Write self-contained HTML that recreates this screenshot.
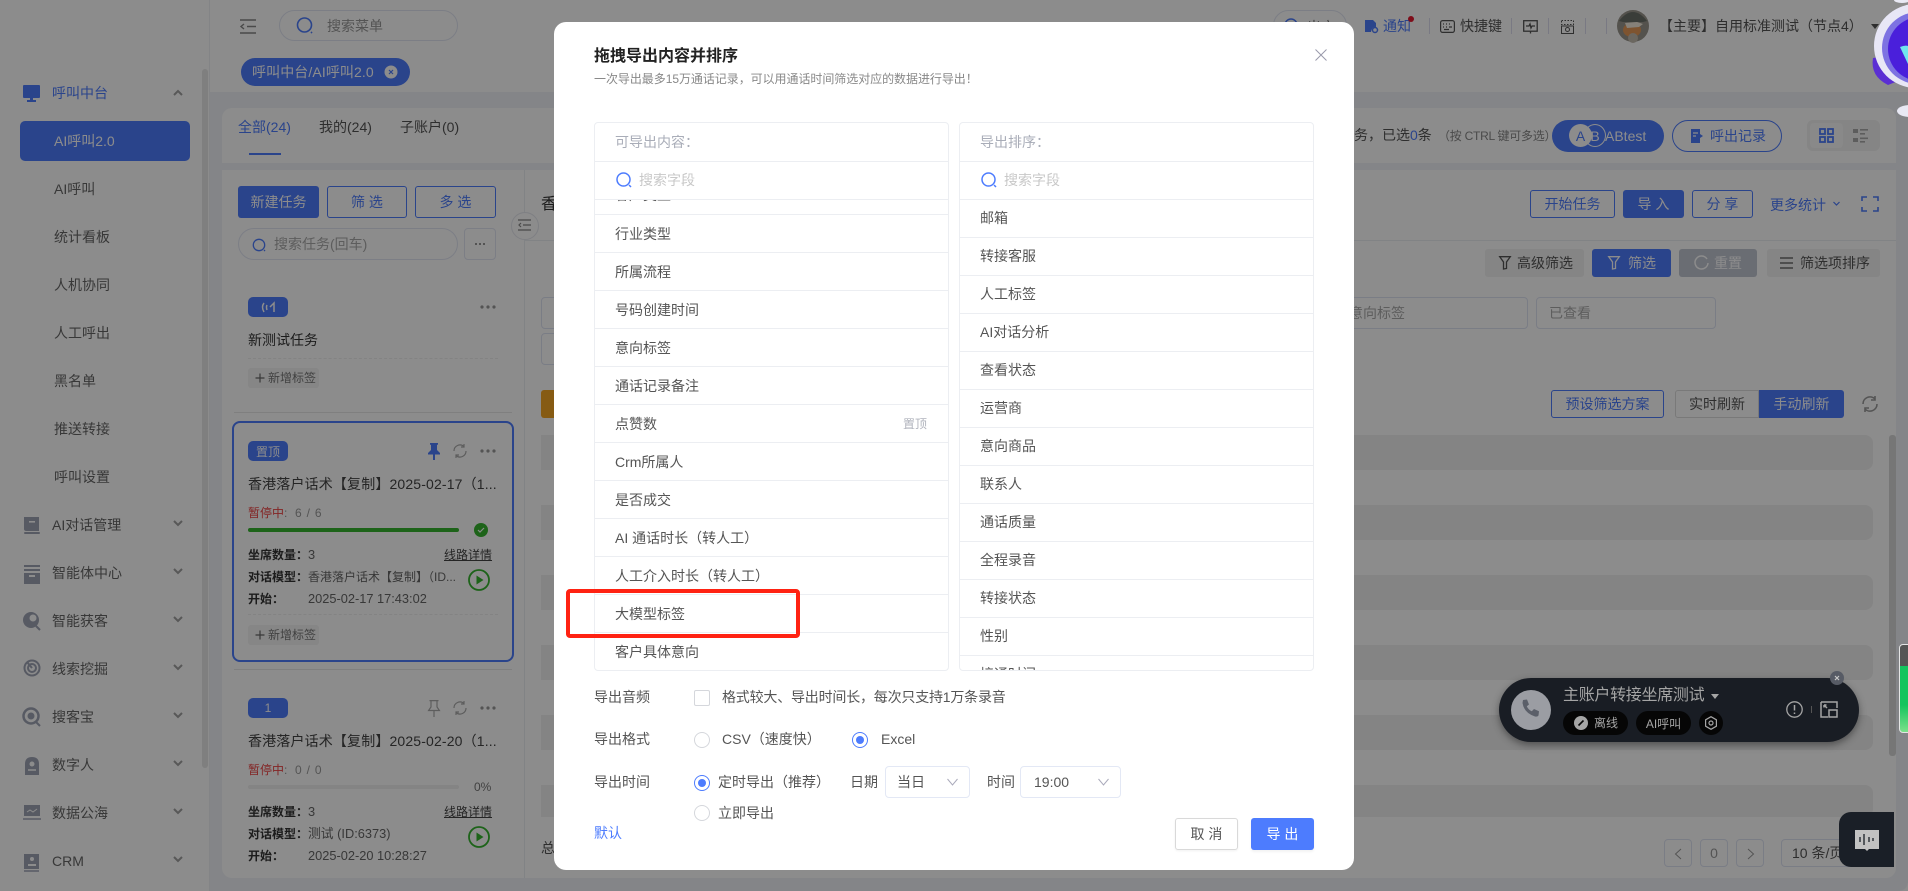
<!DOCTYPE html>
<html lang="zh"><head><meta charset="utf-8"><title>呼叫中台</title>
<style>
*{box-sizing:border-box;margin:0;padding:0}
html,body{width:1908px;height:891px;overflow:hidden;background:#fff}
body{position:relative;font-family:"Liberation Sans","Noto Sans CJK SC",sans-serif;font-size:14px;color:#555}
.t{position:absolute;white-space:nowrap;line-height:20px;height:20px}
.b{position:absolute}
.c{display:flex;align-items:center;justify-content:center;white-space:nowrap}
svg{position:absolute;overflow:visible}
.blue{color:#4d7cfe}
.pri{background:#4d7cfe;color:#fff;border-radius:3px}
.out{border:1px solid #4d7cfe;color:#4d7cfe;border-radius:3px;background:#fff}
.gbtn{background:#f2f2f2;color:#555;border-radius:3px}
.inp{border:1px solid #dfe3f3;border-radius:4px;background:#fff;color:#aaa}
.st{position:absolute;left:541px;width:1332px;background:#f0f0f0;border-radius:0 8px 8px 0}
.m{color:#666}
.lb{font-size:12px;font-weight:700;color:#333}
.v{font-size:12px;color:#666}
.d{font-size:12.8px}
.ov{position:absolute;inset:0;background:rgba(0,0,0,.45)}
.modal{position:absolute;left:554px;top:22px;width:800px;height:848px;background:#fff;border-radius:12px}
.p{position:absolute;border:1px solid #eceef2;border-radius:4px;background:#fff}
.ln{position:absolute;left:0;right:0;height:1px;background:#eceef2}
.r{position:absolute;color:#555;line-height:20px;white-space:nowrap;font-size:14px}
.rad{position:absolute;width:16px;height:16px;border:1px solid #d5d7dc;border-radius:50%;background:#fff}
.rad.on{border-color:#4d7cfe}
.rad.on:after{content:"";position:absolute;left:3px;top:3px;width:8px;height:8px;border-radius:50%;background:#4d7cfe}
.sel{position:absolute;border:1px solid #e3e8f5;border-radius:4px;height:32px;top:744px;line-height:30px;color:#555}
</style></head><body>

<!-- base page -->
<div class="b" style="left:0;top:0;width:1908px;height:891px;background:#f0f2f7"></div>
<div class="b" style="left:0;top:0;width:210px;height:891px;background:#fff;border-right:1px solid #eef0f4"></div>
<div class="b" style="left:202px;top:69px;width:6px;height:699px;background:#e7e7e7;border-radius:3px"></div>
<div class="b" style="left:210px;top:0;width:1698px;height:52px;background:#fff"></div>
<div class="b" style="left:210px;top:52px;width:1698px;height:40px;background:#fff"></div>

<!-- sidebar -->
<svg style="left:23px;top:85px" width="18" height="18" viewBox="0 0 18 18"><rect x="0" y="0" width="17" height="13" rx="1" fill="#4d7cfe"/><rect x="7" y="13" width="3" height="2" fill="#4d7cfe"/><rect x="4" y="15" width="9" height="2" fill="#4d7cfe"/></svg>
<span class="t blue" style="left:52px;top:83px">呼叫中台</span>
<svg style="left:173px;top:89px" width="10" height="8" viewBox="0 0 10 8"><path d="M1 6 5 2l4 4" fill="none" stroke="#a0a0a0" stroke-width="2"/></svg>
<div class="b pri c" style="left:20px;top:121px;width:170px;height:40px;border-radius:5px;justify-content:flex-start;padding-left:34px">AI呼叫2.0</div>
<span class="t m" style="left:54px;top:179px">AI呼叫</span>
<span class="t m" style="left:54px;top:227px">统计看板</span>
<span class="t m" style="left:54px;top:275px">人机协同</span>
<span class="t m" style="left:54px;top:323px">人工呼出</span>
<span class="t m" style="left:54px;top:371px">黑名单</span>
<span class="t m" style="left:54px;top:419px">推送转接</span>
<span class="t m" style="left:54px;top:467px">呼叫设置</span>
<span class="t m" style="left:52px;top:515px">AI对话管理</span>
<span class="t m" style="left:52px;top:563px">智能体中心</span>
<span class="t m" style="left:52px;top:611px">智能获客</span>
<span class="t m" style="left:52px;top:659px">线索挖掘</span>
<span class="t m" style="left:52px;top:707px">搜客宝</span>
<span class="t m" style="left:52px;top:755px">数字人</span>
<span class="t m" style="left:52px;top:803px">数据公海</span>
<span class="t m" style="left:52px;top:851px">CRM</span>
<svg style="left:173px;top:0" width="10" height="891" viewBox="0 0 10 891" fill="none" stroke="#a0a0a0" stroke-width="2"><path d="M1 521l4 4 4-4M1 569l4 4 4-4M1 617l4 4 4-4M1 665l4 4 4-4M1 713l4 4 4-4M1 761l4 4 4-4M1 809l4 4 4-4M1 857l4 4 4-4"/></svg>
<svg style="left:22px;top:510px" width="20" height="370" viewBox="0 0 20 370" fill="#9fa4b5">
<path d="M2 7h15v14H4.500q-2.500 0-2.500-2z"/><rect x="2" y="22" width="16" height="2" rx="1"/><rect x="7" y="11" width="6" height="1.600" fill="#fff"/>
<rect x="2" y="55" width="16" height="2"/><rect x="2" y="59" width="16" height="2"/><path d="M2 63h16v11H2z"/><rect x="7" y="65" width="6" height="2" fill="#fff"/>
<circle cx="9" cy="110" r="8"/><circle cx="11" cy="108" r="3.500" fill="#fff"/><path d="M14 116l4 4" stroke="#9fa4b5" stroke-width="2"/>
<circle cx="10" cy="158" r="7.500" fill="none" stroke="#9fa4b5" stroke-width="2"/><circle cx="10" cy="158" r="4" fill="none" stroke="#9fa4b5" stroke-width="2"/><path d="M5 152l5 6" stroke="#9fa4b5" stroke-width="2"/>
<circle cx="9" cy="206" r="7.500" fill="none" stroke="#9fa4b5" stroke-width="2.500"/><circle cx="9" cy="206" r="3.500" fill="#9fa4b5"/><path d="M14 212l4 4" stroke="#9fa4b5" stroke-width="2"/>
<path d="M3 254q0-7 7-7t7 7v11h-14z"/><circle cx="10" cy="254" r="2.500" fill="#fff"/><path d="M6 260h8" stroke="#fff" stroke-width="1.500"/>
<path d="M2 295h16v11H2z"/><path d="M1 309h18" stroke="#9fa4b5" stroke-width="1.500"/><path d="M5 302l3-2 3 2 4-3" stroke="#fff" fill="none"/>
<rect x="2" y="344" width="15" height="15"/><circle cx="10" cy="349" r="2" fill="#fff"/><path d="M6 355h8" stroke="#fff" stroke-width="2"/><path d="M2 361h15" stroke="#9fa4b5" stroke-width="1.500"/>
</svg>

<!-- header -->
<svg style="left:240px;top:19px" width="16" height="15" viewBox="0 0 16 15" fill="none" stroke="#888" stroke-width="1.400"><path d="M0 1h16M7 7.500h9M0 14h16"/><path d="M4 5 1 7.500 4 10"/></svg>
<div class="b" style="left:279px;top:10px;width:179px;height:31px;border:1px solid #e2e6f3;border-radius:16px"></div>
<svg style="left:296px;top:17px" width="18" height="18" viewBox="0 0 18 18" fill="none" stroke="#4d7cfe" stroke-width="1.600"><circle cx="8.500" cy="8" r="7"/><path d="M15 15l1 1"/></svg>
<span class="t" style="left:327px;top:16px;color:#999">搜索菜单</span>
<div class="b" style="left:1273px;top:10px;width:74px;height:31px;border:1px solid #e2e6f3;border-radius:16px"></div>
<span class="t" style="left:1307px;top:17px;color:#777;font-size:14px">出方</span>
<svg style="left:1283px;top:18px" width="16" height="16" viewBox="0 0 16 16" fill="none" stroke="#4d7cfe" stroke-width="1.500"><circle cx="8" cy="7" r="6"/></svg>

<svg style="left:1365px;top:20px" width="14" height="13" viewBox="0 0 14 13"><path d="M0 0h8l3 3v4q-4-1-5 5H0z" fill="#4d7cfe"/><circle cx="10" cy="10" r="2.500" fill="none" stroke="#4d7cfe" stroke-width="1.500"/></svg>
<span class="t blue" style="left:1383px;top:16px">通知</span>
<div class="b" style="left:1408px;top:16px;width:6px;height:6px;border-radius:50%;background:#e5182f"></div>
<div class="b" style="left:1429px;top:18px;width:1px;height:16px;background:#dde"></div>
<svg style="left:1440px;top:20px" width="15" height="13" viewBox="0 0 15 13" fill="none" stroke="#555" stroke-width="1.200"><rect x=".6" y=".6" width="13.800" height="11.800" rx="2"/><path d="M3 4h1M6 4h1M9 4h1M12 4h0M3 7h1M6 7h1M9 7h3M4 9.500h5" /></svg>
<span class="t" style="left:1460px;top:16px">快捷键</span>
<div class="b" style="left:1511px;top:18px;width:1px;height:16px;background:#dde"></div>
<svg style="left:1523px;top:20px" width="15" height="14" viewBox="0 0 15 14" fill="none" stroke="#555" stroke-width="1.300"><rect x=".7" y=".7" width="13.500" height="10.500"/><path d="M3 6h3l1-2 1 4 1-2h3M7.500 11.500v2"/></svg>
<div class="b" style="left:1548px;top:18px;width:1px;height:16px;background:#dde"></div>
<svg style="left:1561px;top:20px" width="13" height="14" viewBox="0 0 13 14" fill="none" stroke="#555"><rect x=".5" y=".5" width="12" height="4" stroke-dasharray="1.500 1.500"/><rect x=".5" y="6" width="12" height="7.500"/><circle cx="6.500" cy="9.500" r="2"/></svg>
<div class="b" style="left:1585px;top:18px;width:1px;height:16px;background:#dde"></div>
<div class="b" style="left:1606px;top:18px;width:1px;height:16px;background:#dde"></div>
<svg style="left:1617px;top:10px" width="32" height="32" viewBox="0 0 32 32"><circle cx="16" cy="16" r="16" fill="#9a968c"/><path d="M2 11Q16-7 30 11L26 12H6z" fill="#6b6f68"/><ellipse cx="15" cy="20" rx="9" ry="7" fill="#e59a58"/><path d="M8 13l12-1 6 2-4 3-12 1z" fill="#f5ecdc"/><circle cx="16" cy="28" r="5" fill="#c4bcb0"/></svg>
<span class="t" style="left:1659px;top:16px">【主要】自用标准测试（节点4）</span>
<svg style="left:1871px;top:24px" width="8" height="5" viewBox="0 0 8 5"><path d="M0 0h8L4 5z" fill="#555"/></svg>

<!-- tags -->
<div class="b pri" style="left:241px;top:58px;width:169px;height:28px;border-radius:14px"></div>
<span class="t" style="left:252px;top:62px;color:#fff;letter-spacing:.1px">呼叫中台/AI呼叫2.0</span>
<svg style="left:384px;top:65px" width="14" height="14" viewBox="0 0 14 14"><circle cx="7" cy="7" r="6.500" fill="#fff"/><path d="M5 5l4 4M9 5l-4 4" stroke="#4d7cfe" stroke-width="1.200"/></svg>

<!-- tabs card -->
<div class="b" style="left:222px;top:108px;width:1674px;height:55px;background:#fff;border-radius:10px 10px 0 0"></div>
<span class="t blue" style="left:238px;top:117px">全部(24)</span>
<span class="t" style="left:319px;top:117px">我的(24)</span>
<span class="t" style="left:400px;top:117px">子账户(0)</span>
<div class="b" style="left:249px;top:153px;width:32px;height:2px;background:#4d7cfe"></div>
<span class="t" style="left:1354px;top:125px">务，已选<span class="blue">0</span>条</span>
<span class="t" style="left:1438px;top:126px;font-size:12px;color:#888;letter-spacing:-.25px">（按 CTRL 键可多选）</span>
<div class="b pri" style="left:1552px;top:120px;width:112px;height:32px;border-radius:16px"></div>
<div class="b c" style="left:1569px;top:124px;width:23px;height:23px;border-radius:50%;background:#fff;color:#4d7cfe">A</div>
<div class="b c" style="left:1584px;top:124px;width:22px;height:23px;border-radius:50%;border:1px solid #fff;color:#fff">B</div>
<span class="t" style="left:1605px;top:126px;color:#fff">ABtest</span>
<div class="b out" style="left:1672px;top:120px;width:110px;height:32px;border-radius:16px"></div>
<svg style="left:1690px;top:128px" width="14" height="16" viewBox="0 0 14 16"><path d="M1 1h9v5l3 2-3 2v5H1z" fill="#4d7cfe"/><path d="M3 5h5M3 8h3" stroke="#fff" stroke-width="1.200"/></svg>
<span class="t blue" style="left:1710px;top:126px">呼出记录</span>
<div class="b" style="left:1807px;top:120px;width:73px;height:31px;background:#f2f2f2;border-radius:6px"></div>
<div class="b" style="left:1810px;top:123px;width:33px;height:25px;background:#f9f9f9;border-radius:4px"></div>
<svg style="left:1819px;top:128px" width="15" height="15" viewBox="0 0 15 15" fill="none" stroke="#4d7cfe" stroke-width="1.800"><rect x="1" y="1" width="5" height="5"/><rect x="9" y="1" width="5" height="5"/><rect x="1" y="9" width="5" height="5"/><rect x="9" y="9" width="5" height="5"/></svg>
<svg style="left:1853px;top:129px" width="15" height="14" viewBox="0 0 15 14" fill="#aaa"><rect x="0" y="0" width="5" height="4"/><rect x="0" y="9" width="5" height="4"/><rect x="7" y="0" width="8" height="1.600"/><rect x="7" y="4" width="5" height="1.600"/><rect x="7" y="8.500" width="8" height="1.600"/><rect x="7" y="12" width="5" height="1.600"/></svg>

<!-- main card -->
<div class="b" style="left:222px;top:170px;width:1674px;height:708px;background:#fff;border-radius:0 0 10px 10px"></div>
<div class="b" style="left:524px;top:170px;width:1px;height:708px;background:#eceef2"></div>

<!-- task column -->
<div class="b pri c" style="left:238px;top:186px;width:81px;height:32px">新建任务</div>
<div class="b out c" style="left:327px;top:186px;width:80px;height:32px">筛 选</div>
<div class="b out c" style="left:415px;top:186px;width:81px;height:32px">多 选</div>
<div class="b" style="left:238px;top:228px;width:220px;height:32px;border:1px solid #e2e6f3;border-radius:16px"></div>
<svg style="left:252px;top:238px" width="14" height="14" viewBox="0 0 14 14" fill="none" stroke="#4d7cfe" stroke-width="1.300"><circle cx="7" cy="7" r="5.700"/><path d="M12 12l1 1"/></svg>
<span class="t" style="left:274px;top:234px;color:#aaa">搜索任务(回车)</span>
<div class="b" style="left:464px;top:228px;width:32px;height:32px;border:1px solid #e2e6f3;border-radius:4px"></div>
<svg style="left:475px;top:243px" width="10" height="2" viewBox="0 0 10 2" fill="#777"><circle cx="1" cy="1" r="1"/><circle cx="5" cy="1" r="1"/><circle cx="9" cy="1" r="1"/></svg>

<!-- dots for the three task cards -->
<svg style="left:480px;top:0" width="16" height="891" viewBox="0 0 16 891" fill="#999"><circle cx="2" cy="307" r="1.600"/><circle cx="8" cy="307" r="1.600"/><circle cx="14" cy="307" r="1.600"/><circle cx="2" cy="451" r="1.600"/><circle cx="8" cy="451" r="1.600"/><circle cx="14" cy="451" r="1.600"/><circle cx="2" cy="708" r="1.600"/><circle cx="8" cy="708" r="1.600"/><circle cx="14" cy="708" r="1.600"/></svg>

<!-- card 1 -->
<div class="b pri c" style="left:248px;top:297px;width:40px;height:20px;border-radius:5px"></div>
<svg style="left:261px;top:302px" width="14" height="11" viewBox="0 0 14 11" fill="none" stroke="#fff" stroke-width="1.500"><path d="M3 1q-3 4 0 9M6 3q-1 2 0 5M9 5l4-4v9"/></svg>
<span class="t" style="left:248px;top:330px;color:#333">新测试任务</span>
<div class="b" style="left:248px;top:358px;width:250px;border-top:1px dashed #eee"></div>
<div class="b" style="left:248px;top:368px;width:71px;height:20px;background:#f4f4f4;border-radius:3px"></div>
<svg style="left:255px;top:373px" width="10" height="10" viewBox="0 0 10 10"><path d="M5 .5v9M.5 5h9" stroke="#666" stroke-width="1.200"/></svg>
<span class="t" style="left:268px;top:368px;font-size:12px;color:#777">新增标签</span>
<div class="b" style="left:234px;top:412px;width:278px;height:1px;background:#e8e8e8"></div>

<!-- card 2 -->
<div class="b" style="left:232px;top:421px;width:282px;height:241px;border:2px solid #4d7cfe;border-radius:8px"></div>
<div class="b pri c" style="left:248px;top:441px;width:40px;height:20px;border-radius:5px;font-size:12px">置顶</div>
<svg style="left:428px;top:443px" width="12" height="17" viewBox="0 0 12 17"><path d="M2 0h8v1.500L9 2v5l3 3v1.500H7V17H5v-5.500H0V10l3-3V2l-1-.5z" fill="#4d7cfe"/></svg>
<svg style="left:452px;top:443px" width="16" height="16" viewBox="0 0 16 16" fill="none" stroke="#aaa" stroke-width="1.200"><path d="M2 8a6 6 0 0 1 10-4.500M14 8a6 6 0 0 1-10 4.500"/><path d="M12 1v3H9M4 15v-3h3"/></svg>
<span class="t" style="left:248px;top:474px;color:#444;letter-spacing:.15px">香港落户话术【复制】2025-02-17（1...</span>
<span class="t" style="left:248px;top:503px;font-size:12px;color:#ee4444">暂停中<span style="color:#999">:</span></span>
<span class="t" style="left:295px;top:503px;font-size:12px;color:#999;letter-spacing:.8px">6 / 6</span>
<div class="b" style="left:248px;top:528px;width:211px;height:4px;background:#36b52f;border-radius:2px"></div>
<svg style="left:474px;top:523px" width="14" height="14" viewBox="0 0 14 14"><circle cx="7" cy="7" r="7" fill="#36b52f"/><path d="M4 7l2 2 4-4" fill="none" stroke="#fff" stroke-width="1.200"/></svg>
<span class="t lb" style="left:248px;top:545px">坐席数量：</span><span class="t v d" style="left:308px;top:545px">3</span>
<span class="t v" style="left:444px;top:545px;text-decoration:underline;color:#444">线路详情</span>
<span class="t lb" style="left:248px;top:567px">对话模型：</span><span class="t v" style="left:308px;top:567px">香港落户话术【复制】（ID...</span>
<span class="t lb" style="left:248px;top:589px">开始：</span><span class="t v d" style="left:308px;top:589px">2025-02-17 17:43:02</span>
<svg style="left:468px;top:569px" width="22" height="22" viewBox="0 0 22 22"><circle cx="11" cy="11" r="10" fill="none" stroke="#36b52f" stroke-width="1.800"/><path d="M8.500 6.500v9l7-4.500z" fill="#36b52f"/></svg>
<div class="b" style="left:248px;top:614px;width:250px;border-top:1px dashed #eee"></div>
<div class="b" style="left:248px;top:625px;width:71px;height:20px;background:#f4f4f4;border-radius:3px"></div>
<svg style="left:255px;top:630px" width="10" height="10" viewBox="0 0 10 10"><path d="M5 .5v9M.5 5h9" stroke="#666" stroke-width="1.200"/></svg>
<span class="t" style="left:268px;top:625px;font-size:12px;color:#777">新增标签</span>
<div class="b" style="left:234px;top:669px;width:278px;height:1px;background:#e8e8e8"></div>

<!-- card 3 -->
<div class="b pri c" style="left:248px;top:698px;width:40px;height:20px;border-radius:5px;font-size:12px">1</div>
<svg style="left:428px;top:700px" width="12" height="17" viewBox="0 0 12 17" fill="none" stroke="#aaa" stroke-width="1.200"><path d="M1.500.6h9M3 .6V7L.6 10.500h10.800L9 7V.6M6 11v6"/></svg>
<svg style="left:452px;top:700px" width="16" height="16" viewBox="0 0 16 16" fill="none" stroke="#aaa" stroke-width="1.200"><path d="M2 8a6 6 0 0 1 10-4.500M14 8a6 6 0 0 1-10 4.500"/><path d="M12 1v3H9M4 15v-3h3"/></svg>
<span class="t" style="left:248px;top:731px;color:#444;letter-spacing:.15px">香港落户话术【复制】2025-02-20（1...</span>
<span class="t" style="left:248px;top:760px;font-size:12px;color:#ee4444">暂停中<span style="color:#999">:</span></span>
<span class="t" style="left:295px;top:760px;font-size:12px;color:#999;letter-spacing:.8px">0 / 0</span>
<div class="b" style="left:248px;top:785px;width:211px;height:4px;background:#f1f1f1;border-radius:2px"></div>
<span class="t" style="left:474px;top:777px;font-size:12px;color:#777">0%</span>
<span class="t lb" style="left:248px;top:802px">坐席数量：</span><span class="t v d" style="left:308px;top:802px">3</span>
<span class="t v" style="left:444px;top:802px;text-decoration:underline;color:#444">线路详情</span>
<span class="t lb" style="left:248px;top:824px">对话模型：</span><span class="t v d" style="left:308px;top:824px">测试 (ID:6373)</span>
<span class="t lb" style="left:248px;top:846px">开始：</span><span class="t v d" style="left:308px;top:846px">2025-02-20 10:28:27</span>
<svg style="left:468px;top:826px" width="22" height="22" viewBox="0 0 22 22"><circle cx="11" cy="11" r="10" fill="none" stroke="#36b52f" stroke-width="1.800"/><path d="M8.500 6.500v9l7-4.500z" fill="#36b52f"/></svg>

<!-- right side -->
<div class="b" style="left:525px;top:240px;width:1371px;height:1px;background:#eceef2"></div>
<div class="b" style="left:511px;top:212px;width:28px;height:28px;border-radius:50%;background:#fff;border:1px solid #e6e8ee"></div>
<svg style="left:518px;top:219px" width="13" height="12" viewBox="0 0 13 12" fill="none" stroke="#888" stroke-width="1.200"><path d="M0 1h13M5 6h8M0 11h13M3 4 1 6l2 2"/></svg>
<span class="t" style="left:541px;top:195px;color:#333;font-size:16px">香</span>
<div class="b out c" style="left:1530px;top:190px;width:85px;height:28px">开始任务</div>
<div class="b pri c" style="left:1623px;top:190px;width:61px;height:28px">导 入</div>
<div class="b out c" style="left:1692px;top:190px;width:61px;height:28px">分 享</div>
<span class="t blue" style="left:1770px;top:195px">更多统计</span>
<svg style="left:1833px;top:201px" width="7" height="5" viewBox="0 0 7 5"><path d="M.5 1l3 3 3-3" fill="none" stroke="#4d7cfe" stroke-width="1.200"/></svg>
<svg style="left:1861px;top:196px" width="18" height="16" viewBox="0 0 18 16" fill="none" stroke="#4d7cfe" stroke-width="1.600"><path d="M1 5V1h5M12 1h5v4M17 11v4h-5M6 15H1v-4"/></svg>

<div class="b gbtn" style="left:1485px;top:249px;width:99px;height:28px"></div>
<svg style="left:1499px;top:256px" width="12" height="14" viewBox="0 0 12 14" fill="none" stroke="#555" stroke-width="1.300"><path d="M.7.7h10.600L7.500 6v6.500L4.500 13V6z"/></svg>
<span class="t" style="left:1517px;top:253px">高级筛选</span>
<div class="b pri" style="left:1592px;top:249px;width:79px;height:28px"></div>
<svg style="left:1608px;top:256px" width="12" height="14" viewBox="0 0 12 14" fill="none" stroke="#fff" stroke-width="1.300"><path d="M.7.7h10.600L7.500 6v6.500L4.500 13V6z"/></svg>
<span class="t" style="left:1628px;top:253px;color:#fff">筛选</span>
<div class="b" style="left:1679px;top:249px;width:78px;height:28px;background:#c2c6d2;border-radius:3px"></div>
<svg style="left:1694px;top:255px" width="15" height="15" viewBox="0 0 15 15" fill="none" stroke="#fff" stroke-width="1.500"><path d="M13 4a6.500 6.500 0 1 0 1 4"/></svg>
<span class="t" style="left:1714px;top:253px;color:#fff">重置</span>
<div class="b gbtn" style="left:1767px;top:249px;width:113px;height:28px"></div>
<svg style="left:1780px;top:257px" width="13" height="12" viewBox="0 0 13 12" fill="none" stroke="#555" stroke-width="1.300"><path d="M0 1h13M0 6h13M0 11h13"/></svg>
<span class="t" style="left:1800px;top:253px">筛选项排序</span>

<div class="b inp" style="left:1300px;top:297px;width:228px;height:32px"></div>
<span class="t" style="left:1349px;top:303px;color:#aaa">意向标签</span>
<div class="b inp" style="left:1536px;top:297px;width:180px;height:32px"></div>
<span class="t" style="left:1549px;top:303px;color:#aaa">已查看</span>
<div class="b inp" style="left:541px;top:297px;width:100px;height:32px"></div>
<div class="b inp" style="left:541px;top:333px;width:100px;height:32px"></div>
<div class="b" style="left:541px;top:390px;width:60px;height:28px;background:#f5a623;border-radius:3px 0 0 3px"></div>

<div class="b out c" style="left:1551px;top:390px;width:113px;height:28px">预设筛选方案</div>
<div class="b c" style="left:1675px;top:390px;width:84px;height:28px;border:1px solid #ddd;border-radius:3px 0 0 3px;background:#fff">实时刷新</div>
<div class="b pri c" style="left:1759px;top:390px;width:85px;height:28px;border-radius:0 3px 3px 0">手动刷新</div>
<svg style="left:1861px;top:395px" width="18" height="18" viewBox="0 0 18 18" fill="none" stroke="#999" stroke-width="1.600"><path d="M2 9a7 7 0 0 1 12-5M16 9a7 7 0 0 1-12 5"/><path d="M14 1v4h-4M4 17v-4h4"/></svg>

<div class="st" style="top:435px;height:35px"></div>
<div class="st" style="top:505px;height:35px"></div>
<div class="st" style="top:575px;height:35px"></div>
<div class="st" style="top:645px;height:35px"></div>
<div class="st" style="top:715px;height:35px"></div>
<div class="st" style="top:785px;height:32px"></div>
<div class="b" style="left:1889px;top:435px;width:7px;height:321px;background:#d8d8d8;border-radius:3px"></div>
<span class="t" style="left:541px;top:838px">总</span>

<div class="b inp c" style="left:1664px;top:839px;width:28px;height:28px;color:#999">
<svg style="left:9px;top:8px" width="8" height="12" viewBox="0 0 8 12"><path d="M7 1 1.500 6 7 11" fill="none" stroke="#999"/></svg></div>
<div class="b inp c" style="left:1700px;top:839px;width:28px;height:28px;color:#999">0</div>
<div class="b inp c" style="left:1736px;top:839px;width:28px;height:28px;color:#999">
<svg style="left:10px;top:8px" width="8" height="12" viewBox="0 0 8 12"><path d="M1 1l5.500 5L1 11" fill="none" stroke="#999"/></svg></div>
<div class="b inp" style="left:1781px;top:839px;width:90px;height:28px"></div>
<span class="t" style="left:1792px;top:843px;color:#555">10 条/页</span>

<!-- corner cuts -->
<div class="b" style="left:0;top:0;width:8px;height:8px;background:radial-gradient(circle at 100% 100%,transparent 7px,#fff 8px)"></div>
<div class="b" style="left:0;top:883px;width:8px;height:8px;background:radial-gradient(circle at 100% 0,transparent 7px,#fff 8px)"></div>
<div class="b" style="left:1900px;top:883px;width:8px;height:8px;background:radial-gradient(circle at 0 0,transparent 7px,#fff 8px)"></div>

<div class="ov"></div>

<!-- phone widget -->
<div class="b" style="left:1499px;top:678px;width:360px;height:64px;border-radius:32px;background:#191d24;box-shadow:0 3px 8px rgba(0,0,0,.4)"></div>
<div class="b" style="left:1511px;top:690px;width:40px;height:40px;border-radius:50%;background:#9b9da3"></div>
<svg style="left:1521px;top:699px" width="20" height="20" viewBox="0 0 20 20"><path d="M2 1l4-.5 2 5-2.200 1.700q1.500 3.500 5 5L13 10l5 2.200-.5 4.300q-1 1.500-3.500 1Q3 14 1.500 4z" fill="#5b5f69"/></svg>
<span class="t" style="left:1563px;top:686px;font-size:16px;color:#a5a5a5;letter-spacing:-.3px">主账户转接坐席测试</span>
<svg style="left:1711px;top:694px" width="8" height="5" viewBox="0 0 8 5"><path d="M0 0h8L4 5z" fill="#a5a5a5"/></svg>
<div class="b" style="left:1563px;top:711px;width:65px;height:24px;border-radius:12px;background:#060606"></div>
<svg style="left:1574px;top:716px" width="14" height="14" viewBox="0 0 14 14"><circle cx="7" cy="7" r="7" fill="#a5a5a5"/><path d="M4.500 9.500l5-5" stroke="#060606" stroke-width="1.600"/></svg>
<span class="t" style="left:1594px;top:713px;font-size:12px;color:#a5a5a5">离线</span>
<div class="b c" style="left:1636px;top:711px;width:55px;height:24px;border-radius:12px;background:#060606;color:#a5a5a5;font-size:12px">AI呼叫</div>
<div class="b" style="left:1699px;top:711px;width:24px;height:24px;border-radius:50%;background:#060606"></div>
<svg style="left:1704px;top:716px" width="14" height="14" viewBox="0 0 14 14" fill="none" stroke="#a5a5a5" stroke-width="1.200"><path d="M7 .7l5.400 3.100v6.400L7 13.300 1.600 10.200V3.800z" stroke-linejoin="round"/><circle cx="7" cy="7" r="2"/></svg>
<svg style="left:1786px;top:701px" width="17" height="17" viewBox="0 0 17 17"><circle cx="8.500" cy="8.500" r="7.700" fill="none" stroke="#a5a5a5" stroke-width="1.300"/><path d="M8.500 4v5.500M8.500 11.500v1.500" stroke="#a5a5a5" stroke-width="1.500"/></svg>
<div class="b" style="left:1811px;top:706px;width:1px;height:7px;background:#555"></div>
<svg style="left:1820px;top:701px" width="18" height="17" viewBox="0 0 18 17" fill="none" stroke="#a5a5a5" stroke-width="1.500"><path d="M1 1h16v6M1 1v15h7M9 9h8v7H9z"/><path d="M4 4l3 3M4 4h2.500M4 4v2.500" /></svg>
<svg style="left:1830px;top:671px" width="14" height="14" viewBox="0 0 14 14"><circle cx="7" cy="7" r="7" fill="#575b65"/><path d="M5 5l4 4M9 5l-4 4" stroke="#c8c8c8" stroke-width="1.200"/></svg>

<!-- chat -->
<div class="b" style="left:1839px;top:812px;width:55px;height:55px;background:#1a1f27;border-radius:12px 0 0 12px"></div>
<svg style="left:1855px;top:830px" width="24" height="22" viewBox="0 0 24 22"><path d="M0 0h24v19H14l-2 2-2-2H0z" fill="#c2c2c2"/><path d="M5 7v5M9 4v11M14 7v5M18 8v3" stroke="#1a1f27" stroke-width="1.300"/></svg>

<!-- orb -->
<svg style="left:1860px;top:0" width="48" height="125" viewBox="0 0 48 125">
<path d="M13 58q-3 18 15 27l10-4-12-14-6-10z" fill="#5b2fd3"/>
<circle cx="56" cy="46" r="42" fill="#e8e7f6"/>
<circle cx="58" cy="48" r="36" fill="#7d72e2"/>
<circle cx="60" cy="49" r="32" fill="#4a1fdb"/>
<path d="M40 47q5-2 8-1v18z" fill="#6fe6ee"/>
<ellipse cx="50" cy="111" rx="13" ry="6" fill="#e9e9f4"/>
<ellipse cx="42" cy="0" rx="8" ry="3" fill="#e9e9f4"/>
</svg>

<!-- green bar -->
<div class="b" style="left:1899px;top:644px;width:10px;height:89px;border:1px solid #e5e5e5;border-radius:4px 0 0 4px;background:linear-gradient(#555 0,#555 21px,#14c45e 21px,#14c45e 60px,#7be08a 100%)"></div>

<!-- modal -->
<div class="modal">
 <span class="t" style="left:40px;top:25px;font-size:16px;font-weight:700;color:#222">拖拽导出内容并排序</span>
 <span class="t" style="left:40px;top:47px;font-size:12px;color:#888;letter-spacing:-.05px">一次导出最多15万通话记录，可以用通话时间筛选对应的数据进行导出！</span>
 <svg style="left:761px;top:27px" width="12" height="12" viewBox="0 0 12 12"><path d="M.5.5l11 11M11.500.5l-11 11" stroke="#99a" stroke-width="1"/></svg>

 <div class="p" style="left:40px;top:100px;width:355px;height:549px;overflow:hidden">
  <span class="r" style="left:20px;top:9px;color:#a9adb8">可导出内容：</span>
  <div class="ln" style="top:38px"></div>
  <svg style="left:21px;top:49px" width="16" height="16" viewBox="0 0 16 16" fill="none" stroke="#4d7cfe" stroke-width="1.500"><circle cx="7.500" cy="7.500" r="6.500"/><path d="M13 13l2 2"/></svg>
  <span class="r" style="left:44px;top:47px;color:#c8c8c8">搜索字段</span>
  <div class="ln" style="top:76px"></div>
  <div style="position:absolute;left:0;right:0;top:77px;height:472px;overflow:hidden">
   <span class="r" style="left:20px;top:-15px">客户类型</span>
   <div class="ln" style="top:14px"></div>
   <span class="r" style="left:20px;top:24px">行业类型</span>
   <div class="ln" style="top:52px"></div>
   <span class="r" style="left:20px;top:62px">所属流程</span>
   <div class="ln" style="top:90px"></div>
   <span class="r" style="left:20px;top:100px">号码创建时间</span>
   <div class="ln" style="top:128px"></div>
   <span class="r" style="left:20px;top:138px">意向标签</span>
   <div class="ln" style="top:166px"></div>
   <span class="r" style="left:20px;top:176px">通话记录备注</span>
   <div class="ln" style="top:204px"></div>
   <span class="r" style="left:20px;top:214px">点赞数</span>
   <span class="r" style="left:308px;top:214px;font-size:12px;color:#b0b3bc">置顶</span>
   <div class="ln" style="top:242px"></div>
   <span class="r" style="left:20px;top:252px">Crm所属人</span>
   <div class="ln" style="top:280px"></div>
   <span class="r" style="left:20px;top:290px">是否成交</span>
   <div class="ln" style="top:318px"></div>
   <span class="r" style="left:20px;top:328px">AI 通话时长（转人工）</span>
   <div class="ln" style="top:356px"></div>
   <span class="r" style="left:20px;top:366px">人工介入时长（转人工）</span>
   <div class="ln" style="top:394px"></div>
   <span class="r" style="left:20px;top:404px">大模型标签</span>
   <div class="ln" style="top:432px"></div>
   <span class="r" style="left:20px;top:442px">客户具体意向</span>
  </div>
 </div>

 <div class="p" style="left:405px;top:100px;width:355px;height:549px;overflow:hidden">
  <span class="r" style="left:20px;top:9px;color:#a9adb8">导出排序：</span>
  <div class="ln" style="top:38px"></div>
  <svg style="left:21px;top:49px" width="16" height="16" viewBox="0 0 16 16" fill="none" stroke="#4d7cfe" stroke-width="1.500"><circle cx="7.500" cy="7.500" r="6.500"/><path d="M13 13l2 2"/></svg>
  <span class="r" style="left:44px;top:47px;color:#c8c8c8">搜索字段</span>
  <div class="ln" style="top:76px"></div>
  <div style="position:absolute;left:0;right:0;top:77px;height:472px;overflow:hidden">
   <span class="r" style="left:20px;top:8px">邮箱</span><div class="ln" style="top:37px"></div>
   <span class="r" style="left:20px;top:46px">转接客服</span><div class="ln" style="top:75px"></div>
   <span class="r" style="left:20px;top:84px">人工标签</span><div class="ln" style="top:113px"></div>
   <span class="r" style="left:20px;top:122px">AI对话分析</span><div class="ln" style="top:151px"></div>
   <span class="r" style="left:20px;top:160px">查看状态</span><div class="ln" style="top:189px"></div>
   <span class="r" style="left:20px;top:198px">运营商</span><div class="ln" style="top:227px"></div>
   <span class="r" style="left:20px;top:236px">意向商品</span><div class="ln" style="top:265px"></div>
   <span class="r" style="left:20px;top:274px">联系人</span><div class="ln" style="top:303px"></div>
   <span class="r" style="left:20px;top:312px">通话质量</span><div class="ln" style="top:341px"></div>
   <span class="r" style="left:20px;top:350px">全程录音</span><div class="ln" style="top:379px"></div>
   <span class="r" style="left:20px;top:388px">转接状态</span><div class="ln" style="top:417px"></div>
   <span class="r" style="left:20px;top:426px">性别</span><div class="ln" style="top:455px"></div>
   <span class="r" style="left:20px;top:464px">接通时间</span>
  </div>
 </div>

 <div class="b" style="left:12px;top:567px;width:234px;height:49px;border:4px solid #ff2212;border-radius:4px"></div>

 <span class="t" style="left:40px;top:665px">导出音频</span>
 <div class="b" style="left:140px;top:668px;width:16px;height:16px;border:1px solid #d5d7dc;border-radius:2px"></div>
 <span class="t" style="left:168px;top:665px;letter-spacing:-.2px">格式较大、导出时间长，每次只支持1万条录音</span>

 <span class="t" style="left:40px;top:707px">导出格式</span>
 <div class="rad" style="left:140px;top:710px"></div>
 <span class="t" style="left:168px;top:707px">CSV（速度快）</span>
 <div class="rad on" style="left:298px;top:710px"></div>
 <span class="t" style="left:327px;top:707px">Excel</span>

 <span class="t" style="left:40px;top:750px">导出时间</span>
 <div class="rad on" style="left:140px;top:753px"></div>
 <span class="t" style="left:164px;top:750px">定时导出（推荐）</span>
 <span class="t" style="left:296px;top:750px">日期</span>
 <div class="sel" style="left:331px;width:85px;padding-left:11px">当日</div>
 <svg style="left:393px;top:756px" width="11" height="8" viewBox="0 0 11 8"><path d="M.5 1l5 6 5-6" fill="none" stroke="#aab" /></svg>
 <span class="t" style="left:433px;top:750px">时间</span>
 <div class="sel" style="left:466px;width:101px;padding-left:13px">19:00</div>
 <svg style="left:544px;top:756px" width="11" height="8" viewBox="0 0 11 8"><path d="M.5 1l5 6 5-6" fill="none" stroke="#aab" /></svg>

 <div class="rad" style="left:140px;top:783px"></div>
 <span class="t" style="left:164px;top:781px">立即导出</span>
 <span class="t blue" style="left:40px;top:801px">默认</span>
 <div class="b c" style="left:621px;top:796px;width:63px;height:32px;border:1px solid #d9d9d9;border-radius:3px;box-shadow:0 1px 2px rgba(0,0,0,.06)">取 消</div>
 <div class="b c" style="left:697px;top:796px;width:63px;height:32px;background:#4d7cfe;color:#fff;border-radius:3px;box-shadow:0 2px 2px rgba(0,0,0,.05)">导 出</div>
</div>

</body></html>
